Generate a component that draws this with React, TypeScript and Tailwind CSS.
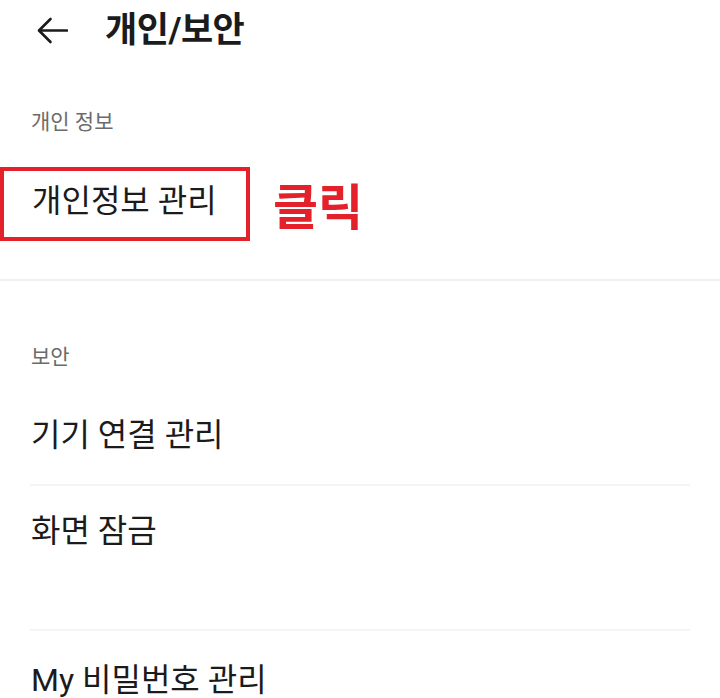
import { ReactNode } from "react";

function SectionLabel({ children, className }: { children: ReactNode; className?: string }) {
  return (
    <div className={`pl-[31px] h-[20px] text-[21px] leading-[20px] text-[#6b6b6b] ${className ?? ""}`}>
      {children}
    </div>
  );
}

function Item({ children, className }: { children: ReactNode; className?: string }) {
  return (
    <div className={`pl-[31px] h-[40px] text-[32px] leading-[40px] text-[#1b1b1b] ${className ?? ""}`}>
      {children}
    </div>
  );
}

export default function App() {
  return (
    <div className="w-[720px] h-[698px] overflow-hidden bg-white font-['Roboto','Noto_Sans_CJK_KR',sans-serif]">
      {/* header */}
      <div className="flex items-center h-[60px] pl-[37px]">
        <svg width="31" height="27" viewBox="0 0 31 27" fill="none" stroke="#1b1b1b" strokeWidth="2.6" strokeLinecap="round" strokeLinejoin="round">
          <path d="M30 13.5H2.5" />
          <path d="M13.5 2L2 13.5L13.5 25" />
        </svg>
        <h1 className="ml-[37px] text-[35px] font-bold leading-none text-[#1b1b1b] tracking-[-0.5px]">개인/보안</h1>
      </div>

      <SectionLabel className="mt-[52px]">개인 정보</SectionLabel>

      <div className="flex items-center mt-[35px]">
        <div className="w-[250px] h-[74px] border-[4px] border-[#e4212b] flex items-center pl-[28px] pb-[6px]">
          <span className="text-[32px] leading-[40px] text-[#1b1b1b]">개인정보 관리</span>
        </div>
        <span className="ml-[23px] pt-[8px] text-[49px] font-bold leading-none text-[#e4212b]">클릭</span>
      </div>

      <div className="mt-[38px] h-[2px] bg-[#efefef]" />

      <SectionLabel className="mt-[66px]">보안</SectionLabel>

      <Item className="mt-[48px]">기기 연결 관리</Item>
      <div className="mt-[29px] mx-[30px] h-[2px] bg-[#f4f4f4]" />

      <Item className="mt-[25px]">화면 잠금</Item>
      <div className="mt-[78px] mx-[30px] h-[2px] bg-[#f4f4f4]" />

      <Item className="mt-[29px]">My 비밀번호 관리</Item>
    </div>
  );
}
